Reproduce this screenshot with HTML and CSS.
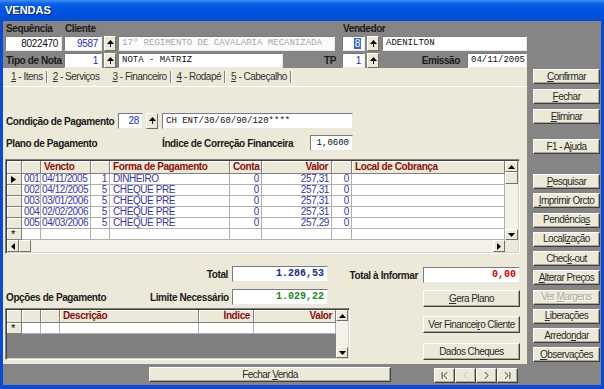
FILE: index.html
```html
<!DOCTYPE html>
<html lang="pt-BR">
  <head>
    <meta charset="UTF-8" />
    <meta name="viewport" content="width=device-width, initial-scale=1.0" />
    <title>Vendas</title>
    <link rel="stylesheet" href="styles.css">
  </head>
  <body>
    <div class="window">
      <div class="titlebar">VENDAS</div>
      <div class="frame">
        <div class="header">
          <div class="hrow hlabels">
            <span class="hlabel w-seq">Sequência</span>
            <span class="hlabel w-cli-label">Cliente</span>
            <span class="hlabel">Vendedor</span>
          </div>
          <div class="hrow">
            <div class="field right w-seq">8022470</div>
            <div class="field right blue w-code">9587</div>
            <span class="pick"><svg width="7" height="8" viewBox="0 0 7 8"><path d="M3.5 0 L7 4 H0 Z" /><rect x="3" y="4" width="1" height="3" /></svg></span>
            <div class="field mono dim w-cli">17º REGIMENTO DE CAVALARIA MECANIZADA</div>
            <div class="field right w-vcode gap-v"><span class="selected">8</span></div>
            <span class="pick"><svg width="7" height="8" viewBox="0 0 7 8"><path d="M3.5 0 L7 4 H0 Z" /><rect x="3" y="4" width="1" height="3" /></svg></span>
            <div class="field mono w-vname">ADENILTON</div>
          </div>
          <div class="hrow second">
            <span class="hlabel w-seq">Tipo de Nota</span>
            <div class="field right blue w-code">1</div>
            <span class="pick"><svg width="7" height="8" viewBox="0 0 7 8"><path d="M3.5 0 L7 4 H0 Z" /><rect x="3" y="4" width="1" height="3" /></svg></span>
            <div class="field mono w-nota">NOTA - MATRIZ</div>
            <span class="hlabel w-tp">TP</span>
            <div class="field right blue w-vcode">1</div>
            <span class="pick"><svg width="7" height="8" viewBox="0 0 7 8"><path d="M3.5 0 L7 4 H0 Z" /><rect x="3" y="4" width="1" height="3" /></svg></span>
            <span class="hlabel w-emissao">Emissão</span>
            <div class="field mono w-date">04/11/2005</div>
          </div>
        </div>

        <div class="middle">
          <div class="sheet">
            <div class="tabs">
              <span class="tab sep"><u>1</u> - Itens</span>
              <span class="tab"><u>2</u> - Serviços</span>
              <span class="tab active sep"><u>3</u> - Financeiro</span>
              <span class="tab sep"><u>4</u> - Rodapé</span>
              <span class="tab sep"><u>5</u> - Cabeçalho</span>
            </div>
            <div class="tabsheet">
              <div class="row cond-row">
                <span class="label w-cond">Condição de Pagamento</span>
                <div class="field right blue w-cond-code">28</div>
                <span class="pick"><svg width="7" height="8" viewBox="0 0 7 8"><path d="M3.5 0 L7 4 H0 Z" /><rect x="3" y="4" width="1" height="3" /></svg></span>
                <div class="field mono w-cond-desc">CH ENT/30/60/90/120****</div>
              </div>
              <div class="row plano-row">
                <span class="label w-plano">Plano de Pagamento</span>
                <span class="label w-indice">Índice de Correção Financeira</span>
                <div class="field mono right w-indice-val">1,0600</div>
              </div>

              <div class="grid pay-grid">
                <div class="grid-main">
                  <table class="data">
                    <tr>
                      <th class="ind c-ind"></th>
                      <th class="c-no"></th>
                      <th class="c-venc">Vencto</th>
                      <th class="c-fp"></th>
                      <th class="c-forma">Forma de Pagamento</th>
                      <th class="c-conta r">Conta</th>
                      <th class="c-valor r">Valor</th>
                      <th class="c-z"></th>
                      <th class="c-local">Local de Cobrança</th>
                    </tr>
                    <tr>
                      <td class="ind"><svg width="5" height="7" viewBox="0 0 5 7"><path d="M0 0 L5 3.5 L0 7 Z" /></svg></td>
                      <td>001</td><td>04/11/2005</td><td class="r">1</td><td>DINHEIRO</td>
                      <td class="r">0</td><td class="r">257,31</td><td class="r">0</td><td></td>
                    </tr>
                    <tr>
                      <td class="ind"></td>
                      <td>002</td><td>04/12/2005</td><td class="r">5</td><td>CHEQUE PRE</td>
                      <td class="r">0</td><td class="r">257,31</td><td class="r">0</td><td></td>
                    </tr>
                    <tr>
                      <td class="ind"></td>
                      <td>003</td><td>03/01/2006</td><td class="r">5</td><td>CHEQUE PRE</td>
                      <td class="r">0</td><td class="r">257,31</td><td class="r">0</td><td></td>
                    </tr>
                    <tr>
                      <td class="ind"></td>
                      <td>004</td><td>02/02/2006</td><td class="r">5</td><td>CHEQUE PRE</td>
                      <td class="r">0</td><td class="r">257,31</td><td class="r">0</td><td></td>
                    </tr>
                    <tr>
                      <td class="ind"></td>
                      <td>005</td><td>04/03/2006</td><td class="r">5</td><td>CHEQUE PRE</td>
                      <td class="r">0</td><td class="r">257,29</td><td class="r">0</td><td></td>
                    </tr>
                    <tr>
                      <td class="ind star">*</td>
                      <td></td><td></td><td></td><td></td><td></td><td></td><td></td><td></td>
                    </tr>
                  </table>
                  <div class="vscroll">
                    <span class="sbtn"><svg width="7" height="4" viewBox="0 0 7 4"><path d="M3.5 0 L7 4 H0 Z" /></svg></span>
                    <span class="thumb"></span>
                    <span class="track"></span>
                    <span class="sbtn"><svg width="7" height="4" viewBox="0 0 7 4"><path d="M0 0 H7 L3.5 4 Z" /></svg></span>
                  </div>
                </div>
                <div class="hscroll">
                  <span class="sbtn"><svg width="4" height="7" viewBox="0 0 4 7"><path d="M4 0 V7 L0 3.5 Z" /></svg></span>
                  <span class="thumb"></span>
                  <span class="track"></span>
                  <span class="sbtn"><svg width="4" height="7" viewBox="0 0 4 7"><path d="M0 0 V7 L4 3.5 Z" /></svg></span>
                  <span class="corner"></span>
                </div>
              </div>

              <div class="lower">
                <div class="lower-left">
                  <div class="row">
                    <span class="label w-total r">Total</span>
                    <div class="field mono strong right navy w-money">1.286,53</div>
                  </div>
                  <div class="row limite-row">
                    <span class="label w-opcoes">Opções de Pagamento</span>
                    <span class="label w-limite r">Limite Necessário</span>
                    <div class="field mono strong right green w-money">1.029,22</div>
                  </div>
                  <div class="grid opt-grid">
                    <div class="grid-main">
                      <div class="opt-body">
                        <table class="data">
                          <tr>
                            <th class="ind c-ind"></th>
                            <th class="c-o1"></th>
                            <th class="c-o2"></th>
                            <th class="c-desc">Descrição</th>
                            <th class="c-indice r">Índice</th>
                            <th class="c-ovalor r">Valor</th>
                          </tr>
                          <tr>
                            <td class="ind star">*</td>
                            <td></td><td></td><td></td><td></td><td></td>
                          </tr>
                        </table>
                      </div>
                      <div class="vscroll small">
                        <span class="sbtn"><svg width="7" height="4" viewBox="0 0 7 4"><path d="M3.5 0 L7 4 H0 Z" /></svg></span>
                        <span class="track"></span>
                        <span class="sbtn"><svg width="7" height="4" viewBox="0 0 7 4"><path d="M0 0 H7 L3.5 4 Z" /></svg></span>
                      </div>
                    </div>
                  </div>
                </div>
                <div class="lower-right">
                  <div class="row informar-row">
                    <span class="label">Total à Informar</span>
                    <div class="field mono strong right red w-money">0,00</div>
                  </div>
                  <button class="btn wide gera"><u>G</u>era Plano</button>
                  <button class="btn wide verfin">Ver Financei<u>r</u>o Cliente</button>
                  <button class="btn wide cheques">Dados Cheques</button>
                </div>
              </div>
            </div>
          </div>

          <div class="side">
            <button class="btn side-btn first"><u>C</u>onfirmar</button>
            <button class="btn side-btn group-a"><u>F</u>echar</button>
            <button class="btn side-btn group-a"><u>E</u>liminar</button>
            <button class="btn side-btn help">F1 - Ajuda</button>
            <button class="btn side-btn search"><u>P</u>esquisar</button>
            <button class="btn side-btn group-b"><u>I</u>mprimir Orcto</button>
            <button class="btn side-btn group-b">Pendência<u>s</u></button>
            <button class="btn side-btn group-b">Locali<u>z</u>ação</button>
            <button class="btn side-btn group-b">Chec<u>k</u>-out</button>
            <button class="btn side-btn group-b"><u>A</u>lterar Preços</button>
            <button class="btn side-btn group-b disabled">Ver <u>M</u>argens</button>
            <button class="btn side-btn group-b"><u>L</u>iberações</button>
            <button class="btn side-btn group-b">Arredo<u>n</u>dar</button>
            <button class="btn side-btn group-b"><u>O</u>bservações</button>
          </div>
        </div>

        <div class="footer">
          <button class="btn close-sale">Fechar <u>V</u>enda</button>
          <div class="nav">
            <button class="btn nav-btn"><svg width="20" height="13" viewBox="0 0 20 13"><path d="M7.5 3 V10 M12.5 3 L9.5 6.5 L12.5 10" /></svg></button>
            <button class="btn nav-btn off"><svg width="20" height="13" viewBox="0 0 20 13"><path d="M11.5 3 L8.5 6.5 L11.5 10" /></svg></button>
            <button class="btn nav-btn"><svg width="20" height="13" viewBox="0 0 20 13"><path d="M8.5 3 L11.5 6.5 L8.5 10" /></svg></button>
            <button class="btn nav-btn"><svg width="20" height="13" viewBox="0 0 20 13"><path d="M7.5 3 L10.5 6.5 L7.5 10 M12.5 3 V10" /></svg></button>
          </div>
        </div>
      </div>
    </div>
  </body>
</html>
```

FILE: styles.css
```css
* {
  box-sizing: border-box;
}
body {
  margin: 0;
  font-family: "Liberation Sans", Arial, sans-serif;
  font-size: 10px;
  letter-spacing: -0.3px;
  color: #222;
  background: #ffffff;
}
u {
  text-decoration: underline;
}
.window {
  width: 604px;
  height: 389px;
  display: flex;
  flex-direction: column;
}
.titlebar {
  height: 21px;
  flex: none;
  padding: 4px 0 0 5px;
  color: #ffffff;
  font-size: 11px;
  font-weight: bold;
  letter-spacing: 0;
  text-shadow: 1px 1px #0a1f6e;
  background: linear-gradient(#3d8ef7 0, #0b5fe6 4px, #0056e0 45%, #0150dc 80%, #0a49c8 100%);
}
.frame {
  flex: 1;
  display: flex;
  flex-direction: column;
  border-style: solid;
  border-color: #0b4ad8;
  border-width: 0 3px 4px 3px;
  background: #858585;
}

/* header */
.header {
  height: 47px;
  flex: none;
  padding-left: 2px;
}
.hrow {
  display: flex;
  align-items: center;
  gap: 2px;
  height: 15px;
}
.hrow.second {
  margin-top: 2px;
}
.hlabels {
  align-items: flex-end;
  padding-bottom: 2px;
}
.hlabel {
  font-weight: bold;
  color: #1a1a1a;
  letter-spacing: -0.4px;
  padding-left: 1px;
  white-space: nowrap;
}
.w-cli-label { width: 276px; }
.w-seq { width: 57px; }
.w-code { width: 38px; }
.w-cli { width: 217px; }
.w-vcode { width: 23px; }
.gap-v { margin-left: 5px; }
.w-vname { width: 145px; margin-left: 1px; }
.w-nota { width: 165px; }
.w-tp { width: 55px; text-align: right; padding-right: 4px; }
.w-emissao { width: 84px; text-align: right; padding-right: 5px; }
.w-date { width: 60px; }

.field {
  height: 15px;
  background: #ffffff;
  border: 1px solid;
  border-color: #7b7b7b #e8e8e8 #e8e8e8 #7b7b7b;
  padding: 0 3px;
  line-height: 13px;
  white-space: nowrap;
  overflow: hidden;
  color: #111;
}
.field.right {
  text-align: right;
}
.blue {
  color: #2b2bc0;
}
.mono {
  font-family: "Liberation Mono", "Courier New", monospace;
  font-size: 9px;
  letter-spacing: 0;
}
.dim {
  color: #a8a8a8;
  background: #fbfbfb;
}
.selected {
  background: #316ac5;
  color: #ffffff;
  padding: 0 1px;
}
.pick {
  width: 12px;
  height: 15px;
  flex: none;
  display: flex;
  align-items: center;
  justify-content: center;
  background: #ece9d8;
  border: 1px solid;
  border-color: #ffffff #716f64 #716f64 #ffffff;
}
.pick svg {
  fill: #000000;
}

/* middle */
.middle {
  flex: 1;
  display: flex;
}
.sheet {
  width: 524px;
  background: #ece9d8;
  display: flex;
  flex-direction: column;
}
.tabs {
  height: 18px;
  display: flex;
  align-items: center;
  padding-left: 5px;
  color: #333;
  letter-spacing: -0.5px;
}
.tab {
  padding: 0 3px 0 3px;
  margin-right: 3px;
  line-height: 12px;
}
.tab.sep {
  border-right: 1px solid #808080;
  box-shadow: 1px 0 #ffffff;
}
.tab.active {
  margin-left: 4px;
}
.tabsheet {
  flex: 1;
  border-top: 1px solid #ffffff;
  padding: 0 2px;
}
.row {
  display: flex;
  align-items: center;
  height: 16px;
}
.row .field {
  height: 16px;
  line-height: 14px;
}
.label {
  font-weight: bold;
  color: #1a1a1a;
  letter-spacing: -0.4px;
  white-space: nowrap;
}
.r {
  text-align: right;
}
.cond-row {
  margin-top: 26px;
}
.w-cond { width: 113px; padding-left: 1px; }
.w-cond-code { width: 25px; }
.cond-row .pick {
  width: 12px;
  height: 16px;
  margin: 0 4px 0 3px;
}
.w-cond-desc { width: 191px; }
.plano-row {
  margin-top: 6px;
}
.w-plano { width: 157px; padding-left: 1px; }
.w-indice { width: 148px; }
.w-indice-val { width: 43px; }

/* grids */
.grid {
  border: 1px solid;
  border-color: #808080 #ffffff #ffffff #808080;
  box-shadow: inset 1px 1px #404040, inset -1px -1px #d4d0c8;
  padding: 1px;
  background: #ffffff;
}
.pay-grid {
  margin-top: 8px;
  width: 515px;
}
.grid-main {
  display: flex;
}
.data {
  border-collapse: separate;
  border-spacing: 0;
  table-layout: fixed;
  color: #3636a8;
  letter-spacing: -0.4px;
}
.data th {
  height: 12px;
  padding: 0 3px;
  background: #ece9d8;
  color: #8b1010;
  font-weight: bold;
  text-align: left;
  line-height: 12px;
  border-right: 1px solid #808080;
  border-bottom: 1px solid #808080;
  box-shadow: inset 1px 1px #ffffff;
  white-space: nowrap;
  overflow: hidden;
}
.data th.r {
  text-align: right;
}
.data td {
  height: 10px;
  padding: 0 2px;
  line-height: 10px;
  background: #ffffff;
  border-right: 1px solid #b0b0b0;
  border-bottom: 1px solid #b0b0b0;
  white-space: nowrap;
  overflow: hidden;
}
.data td.ind {
  background: #ece9d8;
  border-right-color: #808080;
  border-bottom-color: #808080;
  box-shadow: inset 1px 1px #ffffff;
  padding: 0 0 0 4px;
}
.data td.ind svg {
  display: block;
  margin-top: 1px;
}
.star {
  color: #000000;
  font-size: 11px;
  line-height: 10px;
}
.c-ind { width: 15px; }
.c-no { width: 19px; }
.c-venc { width: 50px; }
.c-fp { width: 19px; }
.c-forma { width: 120px; }
.c-conta { width: 32px; }
.c-valor { width: 70px; }
.c-z { width: 20px; }
.c-local { width: 153px; }
.pay-grid td:nth-child(2) {
  padding: 0 0 0 2px;
}
.pay-grid td:nth-child(3) {
  padding-left: 1px;
}
.pay-grid td:nth-child(5) {
  padding-left: 3px;
}
.pay-grid .data {
  width: 498px;
}
.vscroll {
  width: 13px;
  display: flex;
  flex-direction: column;
  background: #f3f1e8;
}
.sbtn {
  flex: none;
  width: 13px;
  height: 11px;
  display: flex;
  align-items: center;
  justify-content: center;
  background: #ece9d8;
  border: 1px solid;
  border-color: #ffffff #716f64 #716f64 #ffffff;
}
.sbtn svg {
  fill: #000000;
}
.thumb {
  flex: none;
  width: 13px;
  height: 12px;
  background: #ece9d8;
  border: 1px solid;
  border-color: #ffffff #716f64 #716f64 #ffffff;
}
.track {
  flex: 1;
}
.hscroll {
  height: 12px;
  display: flex;
  background: #f3f1e8;
}
.hscroll .sbtn {
  width: 12px;
  height: 12px;
}
.hscroll .thumb {
  width: 12px;
  height: 12px;
}
.corner {
  width: 13px;
  background: #ece9d8;
}

/* lower section */
.lower {
  display: flex;
  margin-top: 12px;
}
.lower-left {
  width: 345px;
}
.w-total { width: 227px; padding-right: 4px; }
.w-money { width: 96px; }
.strong {
  font-weight: bold;
  font-size: 10px;
}
.navy { color: #202a90; }
.green { color: #1b8a1b; }
.red { color: #d00000; }
.limite-row {
  margin-top: 7px;
}
.w-opcoes { width: 145px; padding-left: 1px; }
.w-limite { width: 82px; padding-right: 4px; }
.opt-grid {
  margin-top: 3px;
  width: 345px;
  height: 52px;
  background: #808080;
}
.opt-grid .grid-main {
  height: 48px;
}
.opt-body {
  width: 329px;
}
.opt-body .data {
  width: 329px;
}
.c-o1 { width: 19px; }
.c-o2 { width: 19px; }
.c-desc { width: 139px; }
.c-indice { width: 55px; }
.c-ovalor { width: 82px; }
.vscroll.small {
  width: 12px;
}
.vscroll.small .sbtn {
  width: 12px;
}
.lower-right {
  width: 170px;
  display: flex;
  flex-direction: column;
  align-items: flex-end;
}
.informar-row {
  margin-top: 1px;
}
.informar-row .label {
  margin-right: 5px;
}
.w-money.red {
  width: 97px;
}

/* buttons */
.btn {
  font-family: "Liberation Sans", Arial, sans-serif;
  font-size: 10px;
  letter-spacing: -0.55px;
  color: #2a2a2a;
  background: #ece9d8;
  border: 1px solid;
  border-color: #ffffff #404040 #404040 #ffffff;
  box-shadow: inset -1px -1px #aca899;
  padding: 0;
  height: 15px;
  line-height: 12px;
  text-align: center;
}
.wide {
  width: 97px;
  height: 17px;
}
.gera { margin-top: 7px; }
.verfin { margin-top: 9px; }
.cheques { margin-top: 10px; }

.side {
  width: 74px;
  display: flex;
  flex-direction: column;
  padding: 1px 0 0 6px;
}
.side-btn {
  width: 67px;
  flex: none;
}
.group-a { margin-top: 5px; }
.help { margin-top: 15px; }
.search { margin-top: 20px; }
.group-b { margin-top: 4.25px; }
.disabled {
  color: #aca899;
  text-shadow: 1px 1px #ffffff;
}

.footer {
  height: 21px;
  flex: none;
  display: flex;
  padding: 3px 0 0 146px;
}
.close-sale {
  width: 242px;
}
.nav {
  display: flex;
  margin: 1px 0 0 43px;
}
.nav-btn {
  width: 21px;
  display: flex;
  align-items: center;
  justify-content: center;
}
.nav-btn svg {
  fill: none;
  stroke: #333;
  stroke-width: 1;
}
.nav-btn.off svg {
  stroke: #c4c0b0;
}
```
